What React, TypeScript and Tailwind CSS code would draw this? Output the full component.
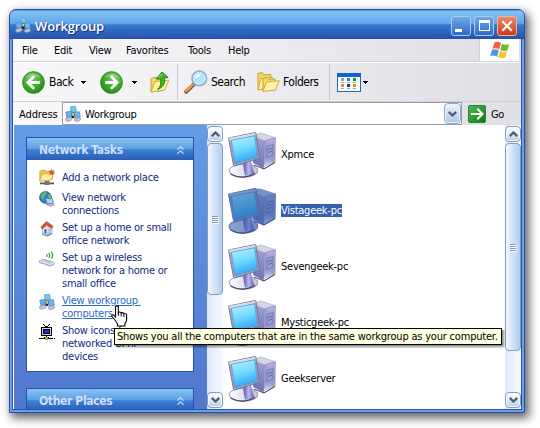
import React from "react";

type P = { className?: string };

const WorkgroupIcon = ({ className = "" }: P) => (
  <svg viewBox="0 0 16 16" className={`h-4 w-4 shrink-0 ${className}`}>
    <path d="M5.500.8l5-.5.8 5.100-5.200.5z" fill="#67cdf6" stroke="#6f97c6" strokeWidth=".8" />
    <path d="M6.300 6h4.500v1.400H6.300z" fill="#6f7487" />
    <path d="M4.500 10l4-2.600 3 3" stroke="#2f3542" strokeWidth="1.500" fill="none" />
    <path d="M.8 6.200l5.200-1 .9 5.400-5 1z" fill="#58b2ee" stroke="#6488be" strokeWidth=".8" />
    <path d="M9.500 6.300l4.900-.5.9 5.200-5 .8z" fill="#62c0f3" stroke="#6488be" strokeWidth=".8" />
    <path d="M.6 12.600l5.600-1.800 1.200 1.700-1 1.700-3.700 1.300-2-1z" fill="#c2c5d3" stroke="#7d8298" strokeWidth=".6" />
    <path d="M9.600 12.700l4.900-1.300 1.300 1.600-.8 1.500-3.800 1.200-1.700-1z" fill="#c2c5d3" stroke="#7d8298" strokeWidth=".6" />
    <rect x="7.200" y="6.800" width="1.800" height="2.200" fill="#f0cf4a" />
    <rect x="6.600" y="9.600" width="2.800" height="2.400" fill="#252b38" />
  </svg>
);

const RoundArrow = ({ flip = false }: { flip?: boolean }) => (
  <svg viewBox="0 0 22 22" className={`h-[23px] w-[23px] shrink-0 ${flip ? "-scale-x-100" : ""}`}>
    <defs>
      <radialGradient id="green" cx=".4" cy=".3" r=".75">
        <stop offset="0" stopColor="#7fd46b" />
        <stop offset=".55" stopColor="#3fae2c" />
        <stop offset="1" stopColor="#1f8a12" />
      </radialGradient>
    </defs>
    <circle cx="11" cy="11" r="10.4" fill="url(#green)" stroke="#2b8a20" strokeWidth=".9" />
    <path d="M4 6.5a8.5 8.5 0 0 1 14 0q-7-3-14 0z" fill="#fff" opacity=".28" />
    <path d="M11.6 4.9L5.6 11l6 6.1M6 11h11" fill="none" stroke="#fff" strokeWidth="2.7" />
  </svg>
);

const Caret = ({ className = "" }: P) => (
  <svg viewBox="0 0 5 3" className={`h-[3px] w-[5px] shrink-0 ${className}`} shapeRendering="crispEdges">
    <path d="M0 0h5v1H0zM1 1h3v1H1zM2 2h1v1H2z" fill="#000" />
  </svg>
);

const FolderUp = ({ className = "" }: P) => (
  <svg viewBox="0 0 20 22" className={`h-[22px] w-5 shrink-0 ${className}`}>
    <path d="M1 7.500l5-1.500 2 1.500h5v12l-12 1.500z" fill="#f3d566" stroke="#c79c2a" strokeWidth=".9" />
    <path d="M1 21L5 10.600l13.800-1.400-4 9.800z" fill="#fff2a6" stroke="#cda638" strokeWidth=".9" />
    <path d="M7.300 18.500q4.200-2.500 3.400-10.500H6.100L12.100 1l6 5.500-3.500.5q1.400 8.500-7.300 11.500z" fill="#41b72e" stroke="#187a12" strokeWidth=".9" />
    <path d="M12 2.800L8.300 7" stroke="#8fe07c" strokeWidth="1" />
  </svg>
);

const SearchIcon = () => (
  <svg viewBox="0 0 24 24" className="h-6 w-6 shrink-0">
    <path d="M9.600 14.600L2.200 21.800" stroke="#8a5a3c" strokeWidth="4" strokeLinecap="round" />
    <path d="M9 14.400L2.200 21" stroke="#f3a145" strokeWidth="2.200" strokeLinecap="round" />
    <path d="M11.800 12.400L9.400 14.800" stroke="#757c90" strokeWidth="3.200" />
    <circle cx="15.300" cy="8.400" r="7.200" fill="#aee6fb" stroke="#9aabd2" strokeWidth="1.900" />
    <circle cx="15.300" cy="8.400" r="5.800" fill="none" stroke="#e2f7ff" strokeWidth="1" />
    <path d="M11 8.500q.8-4.500 5.300-4.500 1.500 2-5.300 4.500z" fill="#fff" />
  </svg>
);

const FoldersIcon = () => (
  <svg viewBox="0 0 23 20" className="h-5 w-[23px] shrink-0">
    <path d="M.8 1.500l4.500-1 1.500 2.200 7-.3v13L1 18z" fill="#f3d363" stroke="#c79c2a" strokeWidth=".9" />
    <path d="M1 17.800l3-11 11.300-1.500-2 10.800z" fill="#fff1a2" stroke="#cda638" strokeWidth=".9" />
    <path d="M6 6.600l4-1 1.400 1.600 6.600-.2v11L6 19z" fill="#f5d76c" stroke="#c79c2a" strokeWidth=".9" />
    <path d="M6 19.400L9.400 10l12.800-1.300-3.700 9.400z" fill="#fff3a6" stroke="#cda638" strokeWidth=".9" />
  </svg>
);

const ViewsIcon = ({ className = "" }: P) => (
  <svg viewBox="0 0 24 19" className={`h-[19px] w-6 shrink-0 ${className}`} shapeRendering="crispEdges">
    <rect x=".5" y=".5" width="23" height="18" fill="#fff" stroke="#2366bd" />
    <rect x="0" y="0" width="24" height="4" fill="#0c63d8" />
    <rect x="4" y="5" width="3" height="3" fill="#9a9bc9" /><rect x="10" y="5" width="3" height="3" fill="#1b83ee" /><rect x="16" y="5" width="3" height="3" fill="#14a012" />
    <rect x="4" y="11" width="3" height="3" fill="#f47c4d" /><rect x="10" y="11" width="3" height="3" fill="#0b3ca6" /><rect x="16" y="11" width="3" height="3" fill="#d39b08" />
    <path d="M4 9h3v1H4zM10 9h3v1h-3zM16 9h3v1h-3zM4 15h3v1H4zM10 15h3v1h-3zM16 15h3v1h-3z" fill="#a8a8a8" />
  </svg>
);

const WindowsFlag = () => (
  <svg viewBox="0 0 20 19" className="h-[19px] w-5">
    <path d="M4.500 1.400Q8 0 11 2.300L9.200 8.500Q6 6.400 2.400 7.800z" fill="#ef6438" />
    <path d="M12 2.800q3.500 2 7.300.2l-1.900 6.200q-3.400 1.800-7.200-.1z" fill="#72b92d" />
    <path d="M2.100 8.800Q5.700 7.500 8.900 9.500L7 15.700Q3.500 13.600.2 15z" fill="#4b93e5" />
    <path d="M9.900 10.100q3.500 1.900 7.200.2l-1.800 6.100q-3.500 1.700-7.300-.1z" fill="#f5c42e" />
  </svg>
);

const Computer = ({ selected = false }: { selected?: boolean }) => (
  <svg viewBox="0 0 48 46" className="h-[46px] w-12 shrink-0">
    <defs>
      <linearGradient id="screen" x1="0" y1="0" x2=".3" y2="1">
        <stop offset="0" stopColor="#b4f3ff" /><stop offset=".5" stopColor="#77dcff" /><stop offset="1" stopColor="#34a8f8" />
      </linearGradient>
      <linearGradient id="side" x1="0" y1="0" x2="0" y2="1">
        <stop offset="0" stopColor="#a5a3d3" /><stop offset="1" stopColor="#706fae" />
      </linearGradient>
      <linearGradient id="front" x1="0" y1="0" x2="0" y2="1">
        <stop offset="0" stopColor="#b0afdc" /><stop offset=".65" stopColor="#9596cc" /><stop offset="1" stopColor="#eeeef4" />
      </linearGradient>
      <linearGradient id="neck" x1="0" y1="0" x2="1" y2="0">
        <stop offset="0" stopColor="#5450b2" /><stop offset=".5" stopColor="#b5b6ee" /><stop offset="1" stopColor="#6662ba" />
      </linearGradient>
      <linearGradient id="foot" x1="0" y1="0" x2="1" y2="0">
        <stop offset="0" stopColor="#ffffff" /><stop offset="1" stopColor="#c4c3da" />
      </linearGradient>
    </defs>
    <path d="M23 3.500L33 1l14.500 4.700L37 9z" fill="#d6d5e6" stroke="#a3a1c2" strokeWidth=".5" />
    <path d="M25 4l12 5-1.200 27.500L25 31z" fill="url(#side)" />
    <path d="M37 8.700l10.400-2.900-.4 24.800-11.400 6.500z" fill="url(#front)" stroke="#8482b2" strokeWidth=".6" />
    <path d="M38.700 14.200l6.200-1.600v10.200l-6.200 2.400z" fill="#9c9cd2" stroke="#6f6eb2" strokeWidth=".8" />
    <path d="M39.800 17.500l4-1M39.800 20.600l4-1.200" stroke="#5b5aa8" strokeWidth=".9" />
    <circle cx="44.600" cy="29.400" r="1.100" fill="#52db3c" />
    <path d="M26 33l10 4 11-6.500" fill="none" stroke="#54496a" strokeWidth="1" />
    <ellipse cx="15.500" cy="38.600" rx="14.300" ry="6.600" fill="url(#foot)" stroke="#8a869f" strokeWidth=".9" />
    <path d="M2.500 42q11.500 6.500 24.500-.6" fill="none" stroke="#4c4266" strokeWidth="1.200" />
    <path d="M15 29l8-2q.6 8 3.200 13.700-5.200 3.300-9.200 2.800-1.700-6.500-2-14.500z" fill="url(#neck)" />
    <path d="M.5 6L26.800.6q1 0 1.200 1l3.500 24.600L6.600 34q-.9 0-1.200-1z" fill="#a5a4c6" stroke="#6a6782" strokeWidth=".8" />
    <path d="M.8 6L27 .9l.5 2.200L1.500 8.600z" fill="#dcdce8" />
    <path d="M3.400 8.200l23-4.300 3.200 21.100-22.600 6.500z" fill="url(#screen)" stroke="#4a8fd0" strokeWidth=".6" />
    {selected && (
      <path d="M0 6L27 0l6 1 15 5-.5 25L36 37.500l-6-2.500v4q-2 5.500-14.500 6.500Q1 45 .5 38.500 2 33 6 34z" fill="#2b5baa" opacity=".55" />
    )}
  </svg>
);

const Chevron = ({ down = false }: { down?: boolean }) => (
  <svg viewBox="0 0 9 6" className={`h-1.5 w-[9px] ${down ? "-scale-y-100" : ""}`}>
    <path d="M.8 5.100L4.500 1.500l3.700 3.600" fill="none" stroke="#4d5d78" strokeWidth="2.300" />
  </svg>
);

const ScrollButton = ({ down = false }: { down?: boolean }) => (
  <div className="flex h-4 w-full shrink-0 items-center justify-center rounded-sm border border-[#7f9db9] bg-linear-to-b from-white via-[#dfeaf8] to-[#b2cdeb] shadow-[inset_0_0_0_1px_#f5faff]">
    <Chevron down={down} />
  </div>
);

const ScrollBar = ({ tall = false }: { tall?: boolean }) => (
  <div className="flex h-full w-4 shrink-0 flex-col bg-linear-to-r from-[#dce9fb] to-[#f8fbff] pt-px pb-px">
    <ScrollButton />
    <div
      className={`mt-px flex w-full flex-col items-center justify-center gap-px rounded-sm border border-[#7f9db9] bg-linear-to-r from-[#f3f8ff] via-[#d0e2f8] to-[#b3cdeb] ${tall ? "h-[208px]" : "h-[152px]"}`}
    >
      {[0, 1, 2, 3].map((i) => (
        <div key={i} className="h-px w-1.5 bg-[#7d98ba] shadow-[1px_1px_0_#fff]" />
      ))}
    </div>
    <div className="flex-1" />
    <ScrollButton down />
  </div>
);

const PlaceIcon = () => (
  <svg viewBox="0 0 16 16" className="h-4 w-4">
    <path d="M.8 2l5-1 1.500 1.500h6v8L.8 12z" fill="#efc550" stroke="#b98b28" strokeWidth=".6" />
    <path d="M.8 11.800L3.300 5l11.500-.8-2.600 7z" fill="#ffee9c" stroke="#c79c33" strokeWidth=".6" />
    <path d="M12.500 0l.8 1.800 2-.6-.8 1.900 1.500 1.300-2 .3-.3 2-1.400-1.500-1.900.8.700-1.900L9.500 1.700l2 .1z" fill="#e5541c" />
    <path d="M1 13.500h14v1.800H1z" fill="#565c64" /><path d="M5.500 12h5v4h-5z" fill="#6f7a78" />
  </svg>
);
const GlobeIcon = () => (
  <svg viewBox="0 0 16 16" className="h-4 w-4">
    <circle cx="6.500" cy="6.500" r="6" fill="#2c7cd8" stroke="#20559d" strokeWidth=".6" />
    <path d="M2 3.500Q4 .8 7 1l.8 2.200L5.500 5 4.800 8.500 2 7.500zM8.500 4l3-1q1.200 2 .8 4l-2.800.5z" fill="#68bd4a" />
    <path d="M6.200 7.200l7.300.6.900 4.500-6.200.5z" fill="#a5d5f5" stroke="#4a6fa8" strokeWidth=".7" />
    <path d="M7 13.500l6.500-.9 2 1.300-3.500 1.600z" fill="#bfc5d4" stroke="#6b7388" strokeWidth=".5" />
  </svg>
);
const HouseIcon = () => (
  <svg viewBox="0 0 16 16" className="h-4 w-4">
    <path d="M3.500 6v6l5 1.500 4.500-2V5.500z" fill="#e9edf8" stroke="#8290aa" strokeWidth=".6" />
    <path d="M8.500 7.500v6l4.500-2V5.500z" fill="#b3c5e8" />
    <path d="M1.800 6L7.500.5l6.700 4.700-1.700 2-4.800-3.100-4.500 4z" fill="#d95128" stroke="#993218" strokeWidth=".5" />
    <path d="M5.300 8h2.200v4.700l-2.200-.7z" fill="#3974ba" />
    <path d="M3 12.300l4.500 1.700 5.500-2.300.8 1.300-5.300 2.800L3 13.800z" fill="#8c96aa" />
  </svg>
);
const WirelessIcon = () => (
  <svg viewBox="0 0 16 16" className="h-4 w-4">
    <path d="M7.500 3q1 1.500 0 3M9.800 1.800q1.800 2.700 0 5M12.200.6q2.800 3.600.2 7" fill="none" stroke="#2ba42a" strokeWidth="1.200" />
    <path d="M.6 9.700l4-1.500 10.500 3.300v2l-4 1.700L.6 11.500z" fill="#c4c6de" stroke="#8a8eab" strokeWidth=".7" />
    <path d="M1 9.800l10.200 3.700 3.900-2" fill="none" stroke="#f5f5ff" strokeWidth=".9" />
  </svg>
);
const UpnpIcon = () => (
  <svg viewBox="0 0 16 16" className="h-4 w-4" shapeRendering="crispEdges">
    <path d="M4 0h1v1H4zM5 1h1v1H5zM6 2h3v1H6zM9 1h1v1H9zM10 0h1v1h-1z" fill="#000" />
    <path d="M2 3h11v9H2z" fill="#000" /><path d="M3 4h9v7H3z" fill="#cfcfcf" /><path d="M4 5h7v5H4z" fill="#000" /><path d="M5 6h5v3H5z" fill="#1c25e8" />
    <path d="M7 12h1v1h2v1h4v1H1v-1h4v-1h2z" fill="#000" /><path d="M6 13h3v3H6z" fill="#a4a82a" /><path d="M0 14h1v1H0zM15 14h1v1h-1z" fill="#000" />
  </svg>
);

const HandCursor = () => (
  <svg viewBox="0 0 17 22" className="absolute top-[305px] left-[111px] h-[22px] w-[17px]">
    <path
      d="M4.500 1.500q1.500-1.300 2.800 0v6q1.500-1.200 2.900.4 1.600-.9 2.700.6 2.300-.4 2.700 1.500v5.500l-1.700 3.200v2.300H6.500v-2.200L4 15 1 11.500q-.5-2 1.200-1.800l2.300 2.300z"
      fill="#fff" stroke="#000" strokeWidth="1.100"
    />
    <path d="M7.400 7v4M10.200 8v3.500M12.900 9v3" stroke="#000" fill="none" />
  </svg>
);

const TaskHeader = ({ label }: { label: string }) => (
  <div className="flex h-[22px] items-center justify-between bg-[linear-gradient(180deg,#86c3f2_0%,#5d9fe4_48%,#3a80d2_54%,#2b5cb8_100%)] pt-0.5 pr-[9px] pl-3">
    <span className="text-[12px] font-bold tracking-[-0.35px] text-[#cfdffa]">{label}</span>
    <svg viewBox="0 0 7 8" className="h-2 w-[7px]">
      <path d="M.5 3.700l3-3 3 3M.5 7.700l3-3 3 3" fill="none" stroke="#d3e6ff" strokeWidth="1.100" />
    </svg>
  </div>
);

const tasks: { icon: React.ReactNode; lines: string[]; hot?: boolean }[] = [
  { icon: <PlaceIcon />, lines: ["Add a network place"] },
  { icon: <GlobeIcon />, lines: ["View network", "connections"] },
  { icon: <HouseIcon />, lines: ["Set up a home or small", "office network"] },
  { icon: <WirelessIcon />, lines: ["Set up a wireless", "network for a home or", "small office"] },
  { icon: <WorkgroupIcon />, lines: ["View workgroup ", "computers"], hot: true },
  { icon: <UpnpIcon />, lines: ["Show icons for", "networked UPnP", "devices"] },
];

const computers = ["Xpmce", "Vistageek-pc", "Sevengeek-pc", "Mysticgeek-pc", "Geekserver"];

const captionButton =
  "flex h-5 w-5 items-center justify-center rounded-[3px] border border-[#a9cdf3] bg-linear-to-b from-[#6ea8e8] to-[#2f6bc8]";

export default function App() {
  return (
    <div className="relative h-[428px] w-[540px] overflow-hidden bg-white pt-[9px] pl-[9px] font-['DejaVu_Sans_Condensed','DejaVu_Sans',sans-serif] text-[11px] leading-[13px] tracking-[-0.25px] text-black">
      <div className="flex h-[404px] w-[516px] flex-col overflow-hidden rounded-t-[7px] border border-[#2450b0] bg-[#6c9fe6] px-[2px] pb-[2px] shadow-[3px_4px_10px_1px_rgba(0,0,0,0.62)]">
        <div className="-mx-[2px] flex h-[29px] shrink-0 items-center bg-[linear-gradient(180deg,#4389d8_0%,#83c3f5_6%,#64a5e9_46%,#3578d0_52%,#2a50ac_100%)] pr-[7px] pl-[5px]">
          <WorkgroupIcon />
          <span className="mt-0.5 ml-1 text-[13px] leading-[16px] font-semibold tracking-[-0.15px] text-white [font-family:'Open_Sans','Noto_Sans',sans-serif] [text-shadow:1px_1px_1px_#17347c]">Workgroup</span>
          <div className="mt-0.5 ml-auto flex gap-[3px]">
            <div className={captionButton}><div className="mt-[9px] mr-[5px] h-[3px] w-[7px] bg-white" /></div>
            <div className={captionButton}><div className="h-[11px] w-[11px] border border-t-[3px] border-white" /></div>
            <div className="flex h-5 w-5 items-center justify-center rounded-[3px] border border-[#f0b3a6] bg-linear-to-b from-[#eb8968] to-[#cc3914]">
              <svg viewBox="0 0 12 12" className="h-3 w-3"><path d="M1.300 1.300l9.400 9.400M10.700 1.300l-9.400 9.400" stroke="#fff" strokeWidth="2.100" /></svg>
            </div>
          </div>
        </div>

        <div className="flex min-h-0 flex-1 flex-col border-x border-b border-[#2d55b0] bg-white">
          <div className="flex h-[23px] shrink-0 border-b border-[#d4d3d9] bg-linear-to-r from-[#f8f8f9] to-[#e1dfe6]">
            <div className="grid flex-1 grid-cols-[32px_35px_37px_62px_40px_1fr] items-center border-r border-[#cfced4] pl-[9px]">
              <span>File</span><span>Edit</span><span>View</span><span>Favorites</span><span>Tools</span><span>Help</span>
            </div>
            <div className="mr-0.5 flex w-[39px] items-center justify-center bg-white"><WindowsFlag /></div>
          </div>
          <div className="flex h-[40px] shrink-0 items-center border-t border-b border-t-white border-b-[#cfced4] bg-linear-to-r from-[#f8f8f9] to-[#e1dfe6] pl-[9px] text-[12px] tracking-[-0.5px]">
            <RoundArrow /><span className="ml-1 w-[32px]">Back</span><Caret />
            <div className="ml-[14px]"><RoundArrow flip /></div><Caret className="ml-[9px]" />
            <FolderUp className="ml-[13px]" />
            <div className="mr-1.5 ml-[7px] h-9 w-px bg-[#c9c8ce]" />
            <SearchIcon /><span className="ml-[3px] w-[46px]">Search</span>
            <FoldersIcon /><span className="ml-[3px] w-[46px]">Folders</span>
            <div className="h-9 w-px bg-[#c9c8ce]" />
            <ViewsIcon className="ml-[7px]" /><Caret className="ml-0.5" />
          </div>
          <div className="flex h-[23px] shrink-0 items-center bg-linear-to-r from-[#f8f8f9] to-[#e1dfe6] pl-1.5">
            <span className="w-[43px] pt-px tracking-[-0.1px]">Address</span>
            <div className="flex h-[23px] w-[400px] items-center border border-[#9d9da1] bg-white pl-0.5">
              <WorkgroupIcon /><span className="ml-1 pt-0.5">Workgroup</span>
              <div className="ml-auto flex h-[21px] w-[17px] items-center justify-center rounded-sm border border-[#8fabc8] bg-linear-to-b from-[#f2f7fd] to-[#a9c6e8] shadow-[inset_0_0_0_1px_#e8f2fd]"><Chevron down /></div>
            </div>
            <svg viewBox="0 0 18 18" className="ml-1.5 h-[18px] w-[18px]">
              <defs><linearGradient id="go" x2="1" y2="1"><stop stopColor="#54b85a" /><stop offset="1" stopColor="#058006" /></linearGradient></defs>
              <rect x=".5" y=".5" width="17" height="17" rx="1.500" fill="url(#go)" stroke="#268533" />
              <path d="M3 9h11M9.300 3.800L14.500 9l-5.200 5.200" fill="none" stroke="#fff" strokeWidth="2" />
            </svg>
            <span className="ml-[5px] pt-px tracking-[-0.5px]">Go</span>
          </div>

          <div className="flex min-h-0 flex-1">
            <div className="flex w-[194px] shrink-0 flex-col gap-4 overflow-hidden border-l border-white bg-linear-to-b from-[#649ce8] to-[#5077cc] pt-3 pr-[13px] pl-3">
              <div className="shrink-0 border border-[#2a50b0] bg-white">
                <TaskHeader label="Network Tasks" />
                <div className="flex h-[211px] flex-col gap-1 overflow-hidden pt-[9px] pl-3 text-[#11297f]">
                  {tasks.map((t, i) => (
                    <div key={i} className="flex shrink-0 gap-[7px]">
                      <div className="h-[13px] w-4 shrink-0 overflow-visible">{t.icon}</div>
                      <div className={`whitespace-pre ${i === 0 ? "pt-0.5 pb-[3px]" : ""} ${t.hot ? "text-[#2c6ac4] underline" : ""}`}>
                        {t.lines.map((l) => <div key={l}>{l}</div>)}
                      </div>
                    </div>
                  ))}
                </div>
              </div>
              <div className="shrink-0 border border-b-0 border-[#2a50b0]"><TaskHeader label="Other Places" /></div>
            </div>
            <ScrollBar />
            <div className="flex flex-1 flex-col gap-2.5 overflow-hidden bg-white pt-[7px] pl-[5px]">
              {computers.map((c, i) => (
                <div key={c} className="flex h-[46px] shrink-0 items-center gap-[5px]">
                  <Computer selected={i === 1} />
                  <span className={`mb-0.5 ${i === 1 ? "bg-[#3560ab] text-white" : ""}`}>{c}</span>
                </div>
              ))}
            </div>
            <ScrollBar tall />
          </div>
        </div>
      </div>

      <div className="absolute top-[328px] left-[114px] flex h-[17px] w-[388px] items-center border border-black bg-[#ffffe1] pl-0.5 tracking-[-0.2px] whitespace-nowrap shadow-[2px_2px_2px_rgba(0,0,0,0.45)]">
        Shows you all the computers that are in the same workgroup as your computer.
      </div>
      <HandCursor />
    </div>
  );
}
